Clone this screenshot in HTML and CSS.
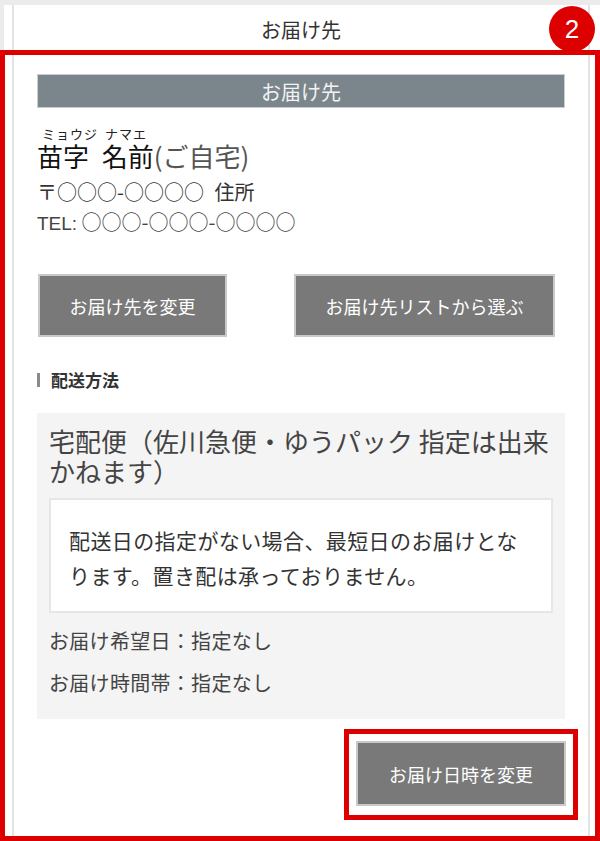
FILE: index.html
```html
<!DOCTYPE html>
<html lang="ja">
<head>
<meta charset="utf-8">
<title>お届け先</title>
<link rel="stylesheet" href="styles.css">
</head>
<body>
<div class="outer">
  <div class="sheet">
    <header class="top">お届け先</header>
    <main class="content">
      <div class="bar">お届け先</div>
      <div class="kana">ミョウジ ナマエ</div>
      <div class="name">苗字 名前<span class="home">(ご自宅)</span></div>
      <div class="addr">〒○○○-○○○○ 住所</div>
      <div class="tel"><span class="lat">TEL:</span> ○○○-○○○-○○○○</div>
      <div class="btns">
        <button class="btn">お届け先を変更</button>
        <button class="btn">お届け先リストから選ぶ</button>
      </div>
      <h2 class="heading">配送方法</h2>
      <section class="ship">
        <p class="ship-title">宅配便（佐川急便・ゆうパック 指定は出来かねます）</p>
        <div class="note">配送日の指定がない場合、最短日のお届けとなります。置き配は承っておりません。</div>
        <p class="row">お届け希望日：指定なし</p>
        <p class="row">お届け時間帯：指定なし</p>
      </section>
      <div class="actions">
        <div class="hl"><button class="btn btn-wide">お届け日時を変更</button></div>
      </div>
    </main>
  </div>
</div>
<div class="frame"></div>
<div class="badge">2</div>
</body>
</html>
```
FILE: styles.css
```css
* { box-sizing: border-box; }
html, body { margin: 0; padding: 0; }
body {
  background: #ebebeb;
  font-family: "Noto Sans CJK JP", "Liberation Sans", sans-serif;
  color: #333;
  width: 600px;
  height: 841px;
  overflow: hidden;
}
.outer {
  margin: 5px 0 0 4px;
  width: 596px;
  height: 836px;
  background: #fff;
  padding: 0 10px 0 8px;
}
.sheet {
  height: 100%;
  border-left: 2px solid #e3e3e3;
  border-right: 2px solid #e3e3e3;
}
.top {
  height: 45px;
  padding-top: 3px;
  display: flex;
  align-items: center;
  justify-content: center;
  font-size: 20px;
  color: #333;
}
.content {
  padding: 0 23px;
}
.bar {
  margin-top: 24px;
  height: 34px;
  line-height: 33px;
  background: #7b858c;
  color: #f2f2f2;
  text-align: center;
  font-size: 20px;
  border: 1px solid #c9ced2;
}
.kana {
  margin-top: 18px;
  padding-left: 5px;
  font-size: 13px;
  letter-spacing: 1px;
  word-spacing: 3px;
  line-height: 16px;
  color: #222;
}
.name {
  font-size: 26px;
  line-height: 28px;
  word-spacing: 7px;
  color: #111;
}
.home { color: #555; }
.addr {
  margin-top: 7px;
  font-size: 20px;
  line-height: 30px;
  word-spacing: 6px;
  color: #333;
}
.tel {
  font-size: 20px;
  line-height: 30px;
  color: #444;
}
.lat { font-family: "Liberation Sans", sans-serif; font-size: 19px; }
.btns {
  margin-top: 35px;
  display: flex;
  gap: 67px;
  padding-left: 1px;
}
.btn {
  font-family: "Noto Sans CJK JP", "Liberation Sans", sans-serif;
  font-size: 18px;
  color: #fff;
  background: #797979;
  border: 2px solid #c9c9c9;
  height: 63px;
  padding: 0 29.5px;
  margin: 0;
  white-space: nowrap;
}
.heading {
  margin: 31px 0 0 0;
  font-size: 17px;
  line-height: 24px;
  font-weight: bold;
  color: #333;
  display: flex;
  align-items: center;
  gap: 11px;
}
.heading::before {
  content: "";
  width: 3px;
  height: 14px;
  background: #8a8a8a;
}
.ship {
  margin-top: 21px;
  background: #f4f4f4;
  padding: 13px 12px 15px;
}
.ship-title {
  margin: 0;
  font-size: 26px;
  line-height: 30px;
  color: #444;
}
.note {
  margin-top: 12px;
  background: #fff;
  border: 2px solid #e6e6e6;
  padding: 23px 18px 18px;
  font-size: 21px;
  letter-spacing: 0.4px;
  line-height: 35px;
  color: #333;
}
.row {
  margin: 0;
  font-size: 20px;
  letter-spacing: 0.3px;
  line-height: 42px;
  color: #444;
}
.note + .row { margin-top: 7px; }
.actions {
  margin-top: 10px;
  display: flex;
  justify-content: flex-end;
  margin-right: -13px;
}
.hl {
  border: 5px solid #dc0000;
  padding: 7px 7px 9px 7px;
}
.btn-wide {
  height: 65px;
  padding: 0 31px;
}
.frame {
  position: absolute;
  left: 0;
  top: 50px;
  width: 600px;
  height: 791px;
  border: 5px solid #dc0000;
  pointer-events: none;
}
.badge {
  position: absolute;
  left: 549px;
  top: 6px;
  width: 46px;
  height: 46px;
  border-radius: 50%;
  background: #dc0000;
  color: #fff;
  font-family: "Liberation Sans", sans-serif;
  font-size: 26px;
  line-height: 46px;
  text-align: center;
}
```
